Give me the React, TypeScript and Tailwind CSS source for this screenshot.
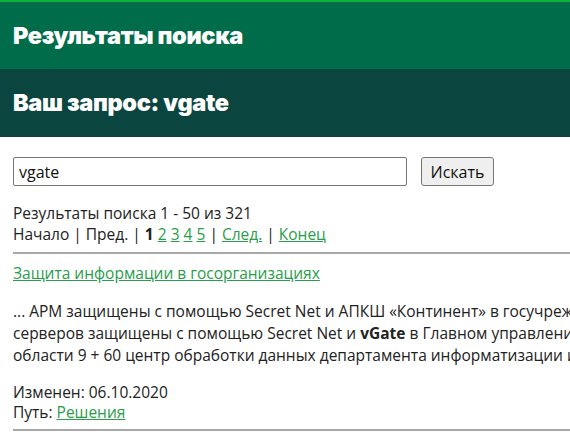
import React, { useState } from "react";

const pages = ["2", "3", "4", "5"];

const App: React.FC = () => {
  const [query, setQuery] = useState("vgate");

  return (
    <div className="w-[570px] h-[437px] overflow-hidden bg-white font-['Open_Sans',sans-serif] text-[#222]">
      <div className="border-t-2 border-[#0fb23c] bg-[#006c4a] h-[69px] flex items-center px-[13px]">
        <h1 className="font-['Inter',sans-serif] font-black text-[23.5px] tracking-[-0.35px] text-white">
          Результаты поиска
        </h1>
      </div>
      <div className="bg-[#0b4540] h-[68px] flex items-center px-[13px]">
        <h2 className="font-['Inter',sans-serif] font-black text-[23.5px] tracking-[-0.35px] text-white">
          Ваш запрос: vgate
        </h2>
      </div>

      <div className="w-[900px] px-[13px] pt-5">
        <div className="flex items-center gap-[14px]">
          <input
            type="text"
            value={query}
            onChange={(e) => setQuery(e.target.value)}
            className="w-[394px] h-[29px] px-[5px] border border-[#767676] rounded-[2px] text-[16px] text-[#111] outline-none"
          />
          <button className="h-[29px] w-[73px] bg-[#efefef] border border-[#767676] rounded-[3px] text-[16px] text-[#111]">
            Искать
          </button>
        </div>

        <div className="mt-[17px] text-[15.5px] leading-[21px]">
          <div>Результаты поиска 1 - 50 из 321</div>
          <div>
            Начало | Пред. | <b>1</b>{" "}
            {pages.map((p) => (
              <React.Fragment key={p}>
                <a href="#" className="text-[#2a9d4b] underline">
                  {p}
                </a>{" "}
              </React.Fragment>
            ))}
            |{" "}
            <a href="#" className="text-[#2a9d4b] underline">
              След.
            </a>{" "}
            |{" "}
            <a href="#" className="text-[#2a9d4b] underline">
              Конец
            </a>
          </div>
        </div>

        <hr className="mt-[7px] border-t-2 border-[#a8a8a8]" />

        <div className="pt-[8px] text-[15.5px]">
          <a href="#" className="text-[#2a9d4b] underline leading-[22px]">
            Защита информации в госорганизациях
          </a>
          <div className="mt-[15px] leading-[22px] whitespace-nowrap">
            <div>
              ... АРМ защищены с помощью Secret Net и АПКШ «Континент» в госучреждениях региона ...
            </div>
            <div>
              серверов защищены с помощью Secret Net и <b>vGate</b> в Главном управлении МЧС ...
            </div>
            <div>области 9 + 60 центр обработки данных департамента информатизации и связи ...</div>
          </div>
          <div className="mt-[16px] leading-[20px]">
            <div>Изменен: 06.10.2020</div>
            <div>
              Путь:{" "}
              <a href="#" className="text-[#2a9d4b] underline">
                Решения
              </a>
            </div>
          </div>
        </div>

        <hr className="mt-[7px] border-t-2 border-[#a8a8a8]" />
      </div>
    </div>
  );
};

export default App;
